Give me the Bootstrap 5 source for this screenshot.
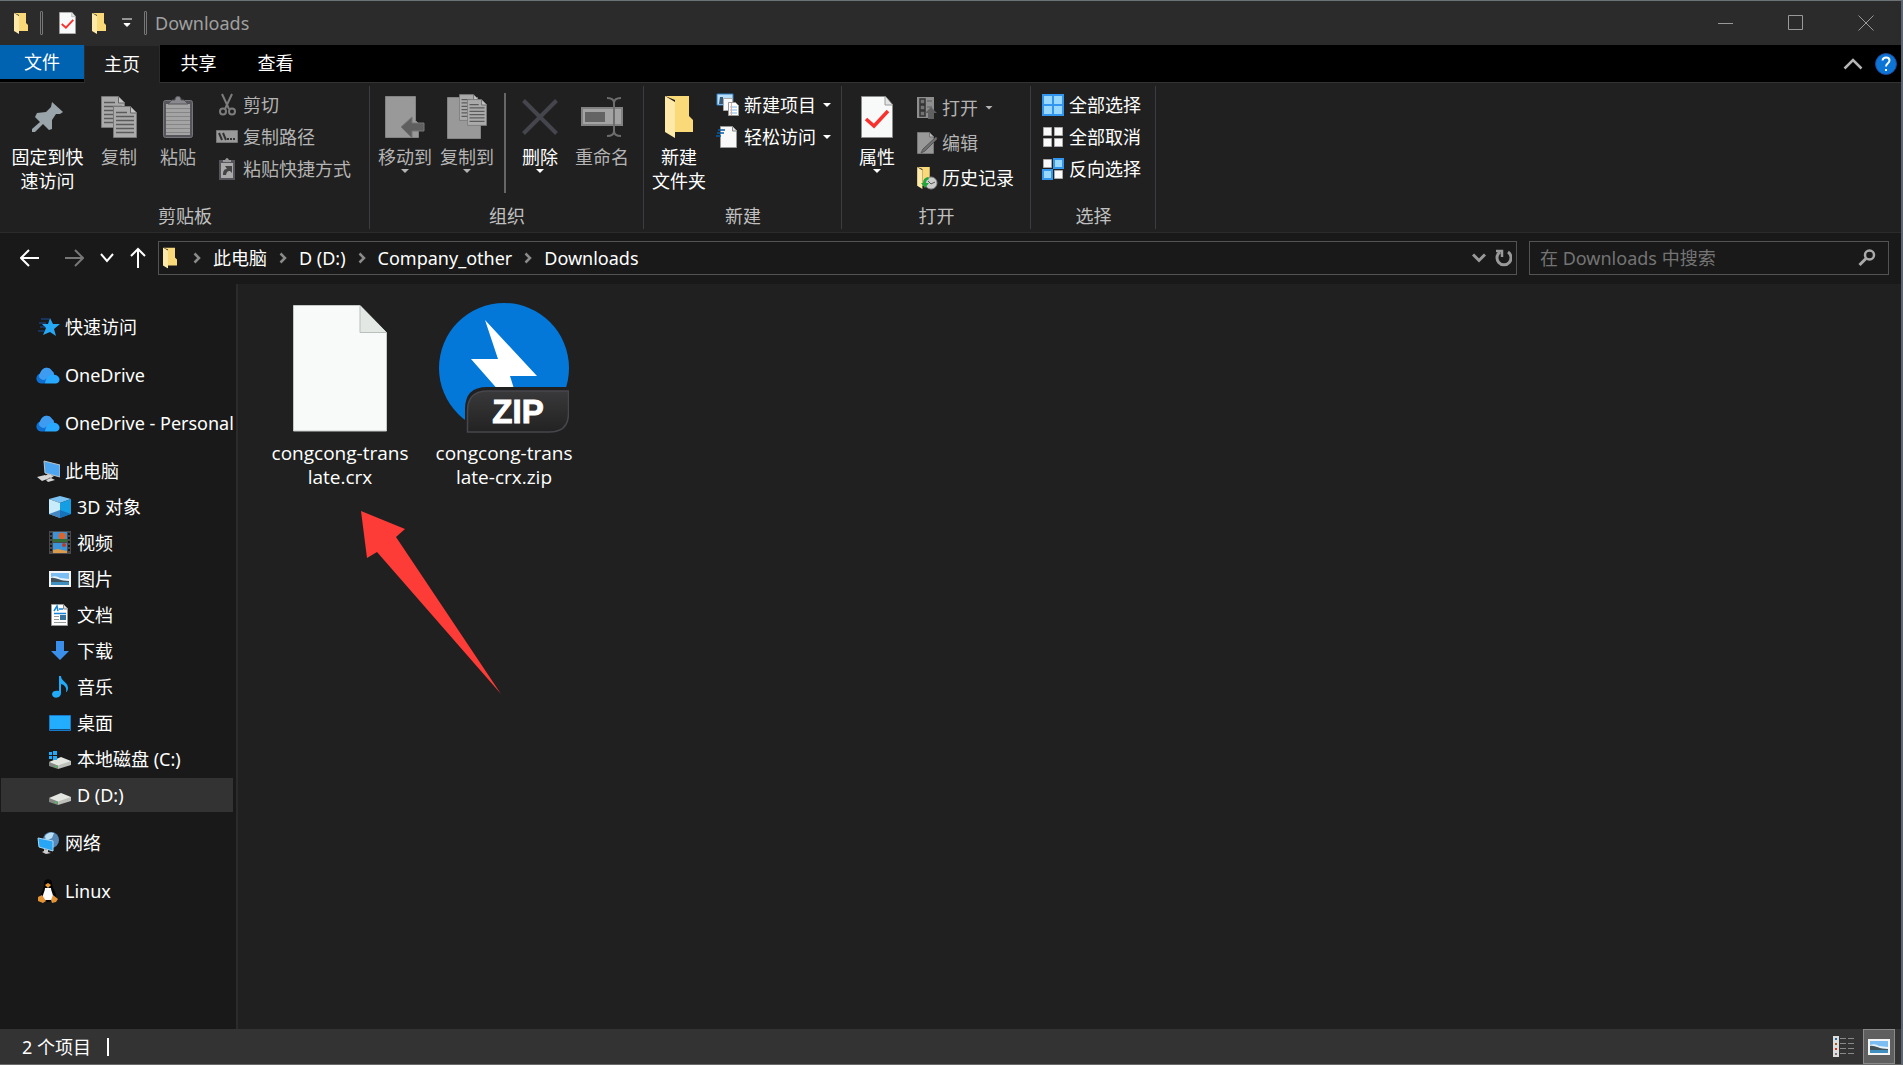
<!DOCTYPE html>
<html lang="zh-CN">
<head>
<meta charset="utf-8">
<meta name="viewport" content="width=device-width, initial-scale=1">
<title>Downloads</title>
<link rel="stylesheet" href="https://cdn.jsdelivr.net/npm/bootstrap@5.3.0/dist/css/bootstrap.min.css">
<style>
  body { font: 18px/24px "Noto Sans", "Noto Sans CJK SC", sans-serif; background: #191919; color: #fff; }
  svg { display: block; flex: none; }
  a { color: inherit; text-decoration: none; }
  .explorer { border-top: 1px solid #6b7377; border-right: 2px solid #5b6670; border-bottom: 1px solid #6a6a6a; }
  .flat { --bs-btn-color: #fff; --bs-btn-hover-color: #fff; --bs-btn-active-color: #fff; --bs-btn-hover-bg: #3a3a3a; --bs-btn-active-bg: #444;
    --bs-btn-border-width: 0; --bs-btn-border-radius: 0; --bs-btn-padding-x: 0; --bs-btn-padding-y: 0;
    --bs-btn-font-size: 18px; --bs-btn-line-height: 24px; --bs-btn-disabled-color: #b4b4b4; --bs-btn-disabled-opacity: 1; }
  .titlebar { background: #2b2b2b; height: 44px; padding-left: 14px; color: #a0a0a0; }
  .grip { width: 3px; height: 24px; border: 1px solid #777; border-radius: 1px; }
  .winbtn { width: 70px; height: 44px; }
  .tabbar { background: #000; border-bottom: 1px solid #333; height: 38px; }
  .tabbar a { width: 77px; height: 36px; display: flex; align-items: center; justify-content: center; }
  .tabbar a.filetab { width: 84px; height: 34px; background: #0063b1; }
  .tabbar a.hometab { background: #202020; border: 1px solid #2b2b2b; border-bottom: 0; width: 76px; height: 38px; padding-bottom: 2px; }
  .ribbon { background: #202020; border-bottom: 1px solid #2b2b2b; padding-top: 3px; height: 150px; }
  .rgroup { border-right: 1px solid #3c3c42; height: 143px; padding: 0 3px 0 4px; }
  .rbody { height: 118px; padding-right: 7px; }
  .wide .rbody { padding-right: 13px; }
  .rlabel { color: #c0c0c0; text-align: center; }
  .big { width: 62px; padding-top: 8px; display: flex; flex-direction: column; align-items: center; white-space: nowrap; }
  .big .pic { height: 46px; margin-bottom: 5px; display: flex; align-items: center; }
  .big.pinbtn { width: 87px; }
  .big.copybtn { width: 56px; }
  .smalls { padding: 3px 0 0 6px; }
  .smalls .btn { display: flex; align-items: center; gap: 4px; height: 32px; white-space: nowrap; }
  .smalls.roomy { padding-top: 4px; }
  .smalls.roomy .btn { height: 35px; }
  .divider { width: 2px; height: 100px; margin: 7px 3px 0 6px; background: #666; }
  .caret { width: 8px; height: 4px; background: currentColor; clip-path: polygon(0 0, 100% 0, 50% 100%); }
  .smalls .caret { margin-left: 3px; }
  .addressbar { height: 51px; padding: 8px 12px 9px 0; gap: 12px; }
  .box { border: 1px solid #535353; height: 34px; background: #191919; }
  .crumbs { gap: 12px; }
  .finder input { background: transparent; border: 0; color: #fff; padding: 0 0 0 10px; font-size: 18px; outline: 0; min-width: 0; }
  .finder input::placeholder { color: #747474; opacity: 1; }
  .finder { width: 360px; }
  .tree { width: 238px; border-right: 2px solid #2b2b2b; padding-top: 25px; flex: none; }
  .tree ul { list-style: none; margin: 0; padding: 0; }
  .tree a { display: flex; align-items: center; gap: 5px; height: 36px; padding-left: 36px; margin-right: 2px; white-space: nowrap; }
  .tree > ul > li { margin-bottom: 12px; }
  .tree ul ul a { padding-left: 48px; }
  .tree ul ul a.current { background: #333; border: 1px solid #191919; padding-left: 47px; }
  .files { background: #202020; padding: 19px 0 0 20px; }
  .tile { width: 164px; text-align: center; font-family: "Open Sans", "Noto Sans CJK SC", sans-serif; font-size: 19px; }
  .tile svg { margin: 0 auto 8px; }
  .pointer { position: absolute; left: 122px; top: 226px; }
  .statusbar { background: #333; height: 35px; padding: 0 6px 0 22px; }
  .viewbtn { width: 32px; height: 35px; background: #5f5f5f; border: 1px solid #8a8a8a; display: flex; align-items: center; justify-content: center; }
</style>
<script src="https://cdn.jsdelivr.net/npm/bootstrap@5.3.0/dist/js/bootstrap.bundle.min.js"></script>
</head>
<body>
<svg width="0" height="0" class="position-absolute" aria-hidden="true">
  <symbol id="folder" viewBox="0 0 14 21"><path d="M0 0h12v10l2 2v6H5V2z" fill="#f9d978"/><path d="M0 0l5 3v18l-5-3z" fill="#ffe9a8"/></symbol>
  <symbol id="crumb" viewBox="0 0 8 12"><path d="M1.500 1.500L6 6l-4.500 4.500" fill="none" stroke="#8b8b8b" stroke-width="2.500"/></symbol>
  <symbol id="cloud" viewBox="0 0 24 17"><path d="M5 16.500C-1 16-1 8 4 6.500 6 0 13-1 16 4l-3 6-4 6.500z" fill="#0f6fd0"/><path d="M4 6.500C6 0 13-1 16 4c2 1 2 2 2 4L8 13c-3 0-7-3-4-6.500z" fill="#3d9cf0"/><path d="M9 16.500c0-3 3-9 8-9 7 0 9 8 3 9z" fill="#28a8ff"/></symbol>
  <symbol id="drive" viewBox="0 0 22 12"><path d="M0 5L12 0l10 4v2L9 11z" fill="#e4e6e2"/><path d="M0 5l9 3.500V12L0 9z" fill="#858784"/><path d="M9 8.500L22 4v4L9 12z" fill="#bcbfba"/><circle cx="7" cy="9.500" r="1" fill="#35d04a"/></symbol>
  <symbol id="photo" viewBox="0 0 22 16"><path d="M0 0h22v16H0z" fill="#f5f5f5"/><path d="M2 2h18v12H2z" fill="#7cbdf3"/><path d="M2 6q5-2 9 1l9 1v2H2z" fill="#e6f3fb"/><path d="M2 7c5-1 8 3 18 3v1H2z" fill="#43535c"/><path d="M2 11h18v3H2z" fill="#3f8fc0"/></symbol>
  <symbol id="checkdoc" viewBox="0 0 32 42"><path d="M.5.5h24l7 8v33H.5z" fill="#f8f9f9" stroke="#8c8c8c"/><path d="M24 1v8h7" fill="#e2e4e3" stroke="#999"/><path d="M5 23l8 7 14-15" fill="none" stroke="#f9302d" stroke-width="3.500"/></symbol>
  <symbol id="sheet" viewBox="0 0 24 32"><path d="M.5.500h17l6 6v25H.5z" fill="#aaa" stroke="#777"/><path d="M17.500 1v6h6" fill="#c5c5c5" stroke="#666"/><path d="M3 6.500h11M3 10.500h18M3 14.500h18M3 18.500h18M3 22.500h18M3 26.500h18" stroke="#5b5b5b" stroke-width="1.500"/></symbol>
</svg>
<div class="explorer d-flex flex-column min-vh-100">
  <header class="titlebar d-flex align-items-center flex-shrink-0">
    <svg class="me-1" width="14" height="21"><use href="#folder"/></svg>
    <span class="grip ms-2"></span>
    <button class="btn flat ms-3" aria-label="属性"><svg width="17" height="22" viewBox="0 0 32 42"><use href="#checkdoc"/></svg></button>
    <button class="btn flat ms-3" aria-label="新建文件夹"><svg width="14" height="21"><use href="#folder"/></svg></button>
    <button class="btn flat ms-3" aria-label="自定义快速访问工具栏"><svg class="me-1" width="10" height="10" viewBox="0 0 10 10"><path d="M0 1h10M2 5.500h6L5 8.500z" fill="#fff" stroke="#fff" stroke-width="1"/></svg></button>
    <span class="grip ms-2"></span>
    <span class="ms-2">Downloads</span>
    <div class="ms-auto d-flex">
      <button class="btn flat winbtn" aria-label="最小化"><svg class="mx-auto" width="16" height="16"><path d="M0 8.500h15" stroke="#999"/></svg></button>
      <button class="btn flat winbtn" aria-label="最大化"><svg class="mx-auto" width="16" height="16"><path d="M.5.500h14v14H.5z" fill="none" stroke="#999"/></svg></button>
      <button class="btn flat winbtn" aria-label="关闭"><svg class="mx-auto" width="16" height="16"><path d="M.5.500l15 15M15.500.500l-15 15" stroke="#999"/></svg></button>
    </div>
  </header>
  <nav class="tabbar d-flex flex-shrink-0">
    <a class="filetab" href="#">文件</a><a class="hometab" href="#">主页</a><a href="#">共享</a><a href="#">查看</a>
    <div class="ms-auto d-flex align-items-center gap-2 me-1">
      <button class="btn flat" aria-label="折叠功能区"><svg width="20" height="12"><path d="M1.500 10.500L10 2l8.500 8.500" fill="none" stroke="#b5b5b5" stroke-width="2.500"/></svg></button>
      <button class="btn flat ms-1" aria-label="帮助"><svg width="22" height="22"><circle cx="11" cy="11" r="10.500" fill="#0b74d4" stroke="#24479c"/><path d="M7.500 7.500C8 3.500 14.500 3.500 14.500 7.500c0 3-3.500 2.500-3.500 6" fill="none" stroke="#fff" stroke-width="2"/><path d="M10 16h2v2h-2z" fill="#fff"/></svg></button>
    </div>
  </nav>
  <section class="ribbon d-flex flex-shrink-0">
    <div class="rgroup">
      <div class="rbody d-flex align-items-start">
        <button class="btn flat big pinbtn"><span class="pic"><svg width="32" height="32"><path d="M20 1l11 10-3 2-4 0-4 6 0 9-3 1-6-6-8 8-3 0 0-3 8-7-5-5 2-4 9-1 5-5z" fill="#99a5ab"/></svg></span>固定到快<br>速访问</button>
        <button class="btn flat big copybtn" disabled><span class="pic"><svg width="36" height="42"><use href="#sheet" width="24" height="32"/><use href="#sheet" x="12" y="10" width="24" height="32"/></svg></span>复制</button>
        <button class="btn flat big" disabled><span class="pic"><svg width="30" height="42"><rect x=".5" y="4.500" width="29" height="37" rx="2" fill="#55555b" stroke="#75757a"/><path d="M3 8h24v31H3z" fill="#a4a4a4"/><path d="M3 12.500h24M3 16.500h24M3 20.500h24M3 24.500h24M3 28.500h24M3 32.500h24M3 36.500h24" stroke="#858585"/><path d="M5 8l4-4h3c0-5 6-5 6 0h3l4 4z" fill="#8a8a8e" stroke="#55555b"/></svg></span>粘贴</button>
        <div class="smalls pe-2">
          <button class="btn flat" disabled><svg width="24" height="24" fill="none" stroke="#7c7c7c" stroke-width="2"><path d="M7 1l7 15M17 1l-7 15"/><circle cx="8" cy="18.500" r="3"/><circle cx="17" cy="18.500" r="3"/></svg>剪切</button>
          <button class="btn flat" disabled><svg width="24" height="24"><path d="M1.500 5.500h21v12h-21z" fill="#999" stroke="#777"/><path d="M4 8l3 7M8 8l3 7M12 14h2m1 0h2m1 0h2" stroke="#333" stroke-width="2"/></svg>复制路径</button>
          <button class="btn flat" disabled><svg width="24" height="24"><path d="M4 3h16v20H4z" fill="#55555b"/><path d="M6 6h12v15H6z" fill="#aaa"/><path d="M8 5V3h2q2-4 4 0h2v2z" fill="#999"/><path d="M8 18c0-4 1-6 4-6l-2-3h7v7l-2-2c-3 0-3 1-4 4z" fill="#444"/></svg>粘贴快捷方式</button>
        </div>
      </div>
      <div class="rlabel">剪贴板</div>
    </div>
    <div class="rgroup">
      <div class="rbody d-flex align-items-start">
        <button class="btn flat big" disabled><span class="pic"><svg width="40" height="42"><path d="M.5.500h30v24l3 3v14H.5z" fill="#999" stroke="#828282"/><path d="M16 31l11-10v6h12v8H27v7z" fill="#5f5f5f" stroke="#777"/></svg></span>移动到<span class="caret"></span></button>
        <button class="btn flat big" disabled><span class="pic"><svg width="40" height="46"><path d="M.5 3.500h30v24l3 3v14H.5z" fill="#999" stroke="#828282"/><use href="#sheet" x="12" y="0" width="20" height="27"/><use href="#sheet" x="20" y="5" width="20" height="27"/></svg></span>复制到<span class="caret"></span></button>
        <span class="divider"></span>
        <button class="btn flat big"><span class="pic"><svg width="36" height="36"><path d="M1.500 1.500l33 33M34.500 1.500l-33 33" stroke="#45454d" stroke-width="4"/></svg></span>删除<span class="caret"></span></button>
        <button class="btn flat big" disabled><span class="pic"><svg width="42" height="40"><path d="M1 11h40v17H1z" fill="#a3a3a3" stroke="#818181" stroke-width="2"/><path d="M4 15h20v10H4z" fill="#646464"/><path d="M26 1q7 0 7 5v28q0 5-7 5M40 1q-7 0-7 5v28q0 5 7 5" fill="none" stroke="#6d6d6d" stroke-width="2"/></svg></span>重命名</button>
      </div>
      <div class="rlabel">组织</div>
    </div>
    <div class="rgroup">
      <div class="rbody d-flex align-items-start">
        <button class="btn flat big"><span class="pic"><svg width="28" height="42" viewBox="0 0 28 42"><use href="#folder"/></svg></span>新建<br>文件夹</button>
        <div class="smalls">
          <button class="btn flat"><svg width="24" height="24"><path d="M1 1h16v11H1z" fill="#b9def7" stroke="#3182c9"/><path d="M4 4h3v3h4v4H3z" fill="#385c77"/><path d="M7.500 5.500h9v12h-9z" fill="#fafafa" stroke="#aaa"/><path d="M12.500 9.500h7l3 3v10h-10z" fill="#fff" stroke="#999"/><path d="M14 14h7M14 17h7M14 20h7" stroke="#7ab6e4"/><path d="M15.500 10v12" stroke="#eda89b"/></svg>新建项目<span class="caret"></span></button>
          <button class="btn flat"><svg width="24" height="24"><path d="M4.500 1.500h12l4 4v17h-16z" fill="#f9f9f9" stroke="#999"/><path d="M16.500 2v4h4" fill="#ddd" stroke="#888"/><path d="M2 5h7M1 8h7M0 11h5" stroke="#075ca8" stroke-width="1.500"/></svg>轻松访问<span class="caret"></span></button>
        </div>
      </div>
      <div class="rlabel">新建</div>
    </div>
    <div class="rgroup wide">
      <div class="rbody d-flex align-items-start">
        <button class="btn flat big"><span class="pic"><svg width="32" height="42"><use href="#checkdoc"/></svg></span>属性<span class="caret"></span></button>
        <div class="smalls roomy">
          <button class="btn flat" disabled><svg width="24" height="24"><path d="M3 1h17v21H3z" fill="#8e8e8e"/><path d="M6 3h5v5H6zM6 9h5v5H6zM6 15h5v5H6z" fill="#737373" stroke="#333" stroke-width="1.500"/><path d="M13 5h5M13 11h5" stroke="#5a5a5a"/><path d="M17 11l6 6h-3v6h-6v-6h-3z" fill="#606060"/></svg>打开<span class="caret"></span></button>
          <button class="btn flat" disabled><svg width="24" height="24"><path d="M3.500 1.500h12l4 4v17h-16z" fill="#999" stroke="#777"/><path d="M15.500 2v4h4" fill="#bbb" stroke="#777"/><path d="M22 6L9 18l-2 4 4-2L23 8z" fill="#707070" stroke="#555"/></svg>编辑</button>
          <button class="btn flat"><svg width="24" height="24"><use href="#folder" x="3" y="1" width="15" height="22"/><circle cx="17" cy="17" r="6" fill="#ccc" stroke="#888"/><path d="M14 15l3 3 4-2" fill="none" stroke="#555"/><path d="M14 11q-5 1-5 6H7l4 5 4-5h-3q0-3 3-4z" fill="#20a63c"/></svg>历史记录</button>
        </div>
      </div>
      <div class="rlabel">打开</div>
    </div>
    <div class="rgroup">
      <div class="rbody d-flex align-items-start">
        <div class="smalls pe-1">
          <button class="btn flat"><svg width="24" height="24"><path d="M1 1h22v22H1z" fill="#3296ee"/><path d="M3 3h8v8H3zM13 3h8v8h-8zM3 13h8v8H3zM13 13h8v8h-8z" fill="#98d8ff"/></svg>全部选择</button>
          <button class="btn flat"><svg width="24" height="24"><path d="M2.500 2.500h8v8h-8zM13.500 2.500h8v8h-8zM2.500 13.500h8v8h-8zM13.500 13.500h8v8h-8z" fill="#fafafa" stroke="#aaa"/></svg>全部取消</button>
          <button class="btn flat"><svg width="24" height="24"><path d="M2.500 2.500h8v8h-8zM13.500 13.500h8v8h-8z" fill="#fafafa" stroke="#aaa"/><path d="M13 2h9v9h-9zM2 13h9v9H2z" fill="#98d8ff" stroke="#3296ee" stroke-width="2"/></svg>反向选择</button>
        </div>
      </div>
      <div class="rlabel">选择</div>
    </div>
  </section>
  <div class="addressbar d-flex align-items-center flex-shrink-0">
    <div class="d-flex align-items-center gap-3 ps-3">
      <button class="btn flat ms-1" aria-label="后退"><svg width="20" height="18" fill="none" stroke="#fff" stroke-width="2"><path d="M19 9H1M9 1L1 9l8 8"/></svg></button>
      <button class="btn flat ms-2" aria-label="前进" disabled><svg width="20" height="18" fill="none" stroke="#777" stroke-width="2"><path d="M1 9h18M11 1l8 8-8 8"/></svg></button>
      <button class="btn flat" aria-label="最近浏览的位置"><svg width="14" height="10" fill="none" stroke="#fff" stroke-width="2"><path d="M1 1l6 7 6-7"/></svg></button>
      <button class="btn flat" aria-label="上移"><svg width="16" height="22" fill="none" stroke="#fff" stroke-width="2"><path d="M8 21V2M1 9l7-7 7 7"/></svg></button>
    </div>
    <div class="box d-flex align-items-center flex-grow-1">
      <div class="crumbs d-flex align-items-center flex-grow-1 ps-1">
        <svg class="me-1" width="14" height="22" viewBox="0 0 14 21"><use href="#folder"/></svg>
        <svg width="8" height="12"><use href="#crumb"/></svg><a href="#">此电脑</a>
        <svg width="8" height="12"><use href="#crumb"/></svg><a href="#">D (D:)</a>
        <svg width="8" height="12"><use href="#crumb"/></svg><a href="#">Company_other</a>
        <svg width="8" height="12"><use href="#crumb"/></svg><a href="#">Downloads</a>
      </div>
      <button class="btn flat" aria-label="以前的位置"><svg width="14" height="10" fill="none" stroke="#999" stroke-width="3"><path d="M1 1.500l6 6 6-6"/></svg></button>
      <button class="btn flat ms-2" aria-label="刷新"><svg class="me-1" width="18" height="18" fill="none" stroke="#999" stroke-width="3"><path d="M14 3a7 7 0 1 1-8 0"/><path d="M2 2h6v6" stroke-width="2.500"/></svg></button>
    </div>
    <div class="box finder d-flex align-items-center">
      <input class="flex-grow-1" type="search" placeholder="在 Downloads 中搜索" aria-label="搜索">
      <button class="btn flat me-2" aria-label="搜索"><svg class="me-1" width="18" height="18" fill="none" stroke="#aaa"><circle cx="11.500" cy="6" r="4.500" stroke-width="2.500"/><path d="M8 9.500L1.500 16" stroke-width="3"/></svg></button>
    </div>
  </div>
  <main class="d-flex flex-grow-1">
    <nav class="tree">
      <ul>
        <li><a href="#"><svg width="24" height="24"><path d="M14 3l3 6 7 0-6 5 2 7-6-4-7 3 3-7-4-4h6z" fill="#26a8f5"/><path d="M5 4h8M3 8h7M4 12h5M2 16h6" stroke="#1c4e9c"/></svg>快速访问</a></li>
        <li><a href="#"><svg width="24" height="17"><use href="#cloud"/></svg>OneDrive</a></li>
        <li><a href="#"><svg width="24" height="17"><use href="#cloud"/></svg>OneDrive - Personal</a></li>
        <li><a href="#"><svg width="24" height="24"><path d="M8 2l16 4v12L9 14z" fill="#4da6f2" stroke="#b9c5cc"/><path d="M1 18l8-2 5 3-8 3zM12 15l6 2-3 2-6-2zM10 21l5-2 4 2-7 2z" fill="#d6d6d6"/></svg>此电脑</a>
          <ul>
            <li><a href="#"><svg width="24" height="24"><path d="M1 4l11-3 11 3-11 4z" fill="#7cc3f5"/><path d="M1 4l11 4v15L1 19z" fill="#c8ecfb"/><path d="M12 8l11-4v15l-11 4z" fill="#149fe4"/><path d="M1 19l11-4v8zM12 15l11 4-11 4z" fill="#1764ad" opacity=".75"/></svg>3D 对象</a></li>
            <li><a href="#"><svg width="24" height="24"><path d="M1 0h22v23H1z" fill="#4a4a4c"/><path d="M5 1h14v10H5zM5 12h14v10H5z" fill="#3d93d8"/><circle cx="14" cy="5" r="3.500" fill="#dd652c"/><path d="M5 8h14v3H5z" fill="#316b35"/><path d="M5 19l5-1 9 2v2H5z" fill="#d99b4d"/><circle cx="16" cy="14" r="2" fill="#b93b27"/><path d="M3 2v20M21 2v20" stroke="#151515" stroke-width="2" stroke-dasharray="2 2"/></svg>视频</a></li>
            <li><a href="#"><svg width="24" height="16" viewBox="-1 0 24 16"><use href="#photo" width="22" height="16"/></svg>图片</a></li>
            <li><a href="#"><svg width="24" height="24"><path d="M3.500 1.500h12l4 4v17h-16z" fill="#fff" stroke="#999"/><path d="M15.500 2v4h4" fill="#ddd" stroke="#888"/><path d="M6 8l3-5 1 5m1-2h4M6 10.500h12" stroke="#1684d8" stroke-width="1.500" fill="none"/><path d="M6 13.500h5M6 16.500h5M6 19.500h12" stroke="#999"/><path d="M12 12h6v5h-6z" fill="#37739f"/></svg>文档</a></li>
            <li><a href="#"><svg width="24" height="24"><path d="M8 2h8v10h5l-9 9-9-9h5z" fill="#398fe9"/></svg>下载</a></li>
            <li><a href="#"><svg width="24" height="24"><path d="M11 1h2c0 5 7 6 7 12 0 2-1 4-2 4 1-4-1-7-5-8v9c0 6-9 6-9 1 0-3 4-4 7-3z" fill="#20aaf7"/></svg>音乐</a></li>
            <li><a href="#"><svg width="24" height="16"><path d="M1.500.500h21v15h-21z" fill="#22adff" stroke="#197ac9"/><path d="M2 14.500h20" stroke="#144b7f"/></svg>桌面</a></li>
            <li><a href="#"><svg width="24" height="24"><use href="#drive" x="1" y="10" width="22" height="12"/><path d="M1 5h3v3H1zM5 4h4v4H5zM1 9h3v3H1zM5 9h4v4H5z" fill="#1eabfa"/></svg>本地磁盘 (C:)</a></li>
            <li><a href="#" class="current"><svg width="24" height="24"><use href="#drive" x="1" y="10" width="22" height="12"/></svg>D (D:)</a></li>
          </ul></li>
        <li><a href="#"><svg width="24" height="24"><circle cx="15" cy="9" r="8" fill="#5688b8"/><path d="M9 5q4-5 9-3l-2 5-6 3z" fill="#bce0f3"/><path d="M2 7l15 3v10L3 16z" fill="#28a5f5" stroke="#a9d7f2"/><path d="M8 18l4 1v2l3 1-5 1-4-2 2-1z" fill="#ccc"/></svg>网络</a></li>
        <li><a href="#"><svg width="24" height="24"><path d="M8 4c0-5 8-5 8 0 0 6 5 8 4 16l-8 3-8-3c0-7 4-8 4-16z" fill="#050505"/><path d="M9 9h6c0 4 4 8 1 12H8c-3-4 1-8 1-12z" fill="#fff"/><path d="M9 6l3-2 3 2-3 3z" fill="#e79a30"/><path d="M2 18l4-2 4 6-3 2-5-2zM15 21l2-5 5 4-2 3-4 1z" fill="#e49436"/></svg>Linux</a></li>
      </ul>
    </nav>
    <section class="files flex-grow-1 d-flex align-items-start position-relative">
      <a class="tile" href="#"><svg width="94" height="130"><path d="M.5 2.500H67l26.500 27v98.500H.5z" fill="#f8faf9" stroke="#c3c9c5"/><path d="M67 2.500v27h26.500z" fill="#e4e8e5"/><path d="M67 3v26.500h26.500" fill="none" stroke="#b9bfbb"/></svg>congcong-trans<br>late.crx</a>
      <a class="tile" href="#"><svg width="130" height="130"><defs><linearGradient id="plate" x2="0" y2="1"><stop stop-color="#39393b"/><stop offset="1" stop-color="#222"/></linearGradient></defs><circle cx="65" cy="65" r="65" fill="#0378d8"/><path d="M46 17l52 56H71l5 16H61L32 56h27z" fill="#fff"/><path d="M26 130v-24q0-22 22-22h82v46z" fill="#202020"/><path d="M28.500 129v-21q0-20 20-20h81v22q0 19-19 19z" fill="url(#plate)" stroke="#46464c" stroke-width="1.500"/><text x="79" y="120" text-anchor="middle" font-family="Liberation Sans" font-size="33" font-weight="700" fill="#fff" stroke="#fff">ZIP</text></svg>congcong-trans<br>late-crx.zip</a>
      <svg class="pointer" width="142" height="184"><path d="M1 1l44 18-9 8 105 157L17 42 7 48z" fill="#fd3b37"/></svg>
    </section>
  </main>
  <footer class="statusbar d-flex align-items-center flex-shrink-0">
    <span>2 个项目</span><svg class="ms-3" width="2" height="18"><path d="M0 0h2v18H0z" fill="#fff"/></svg>
    <div class="ms-auto d-flex align-items-center gap-2">
      <button class="btn flat" aria-label="详细信息"><svg width="22" height="22"><path d="M0 0h6v21H0z" fill="#ddd"/><path d="M2 2h2v2H2z" fill="#286ba2"/><path d="M2 7h2v2H2z" fill="#985b29"/><path d="M2 12h2v2H2z" fill="#d8311c"/><path d="M2 17h2v2H2z" fill="#777"/><path d="M7 2.500h6m2 0h6M7 7.500h6m2 0h6M7 12.500h6m2 0h6M7 17.500h6m2 0h6" stroke="#888"/></svg></button>
      <button class="btn flat viewbtn" aria-label="大图标"><svg width="22" height="16"><use href="#photo"/></svg></button>
    </div>
  </footer>
</div>
</body>
</html>
